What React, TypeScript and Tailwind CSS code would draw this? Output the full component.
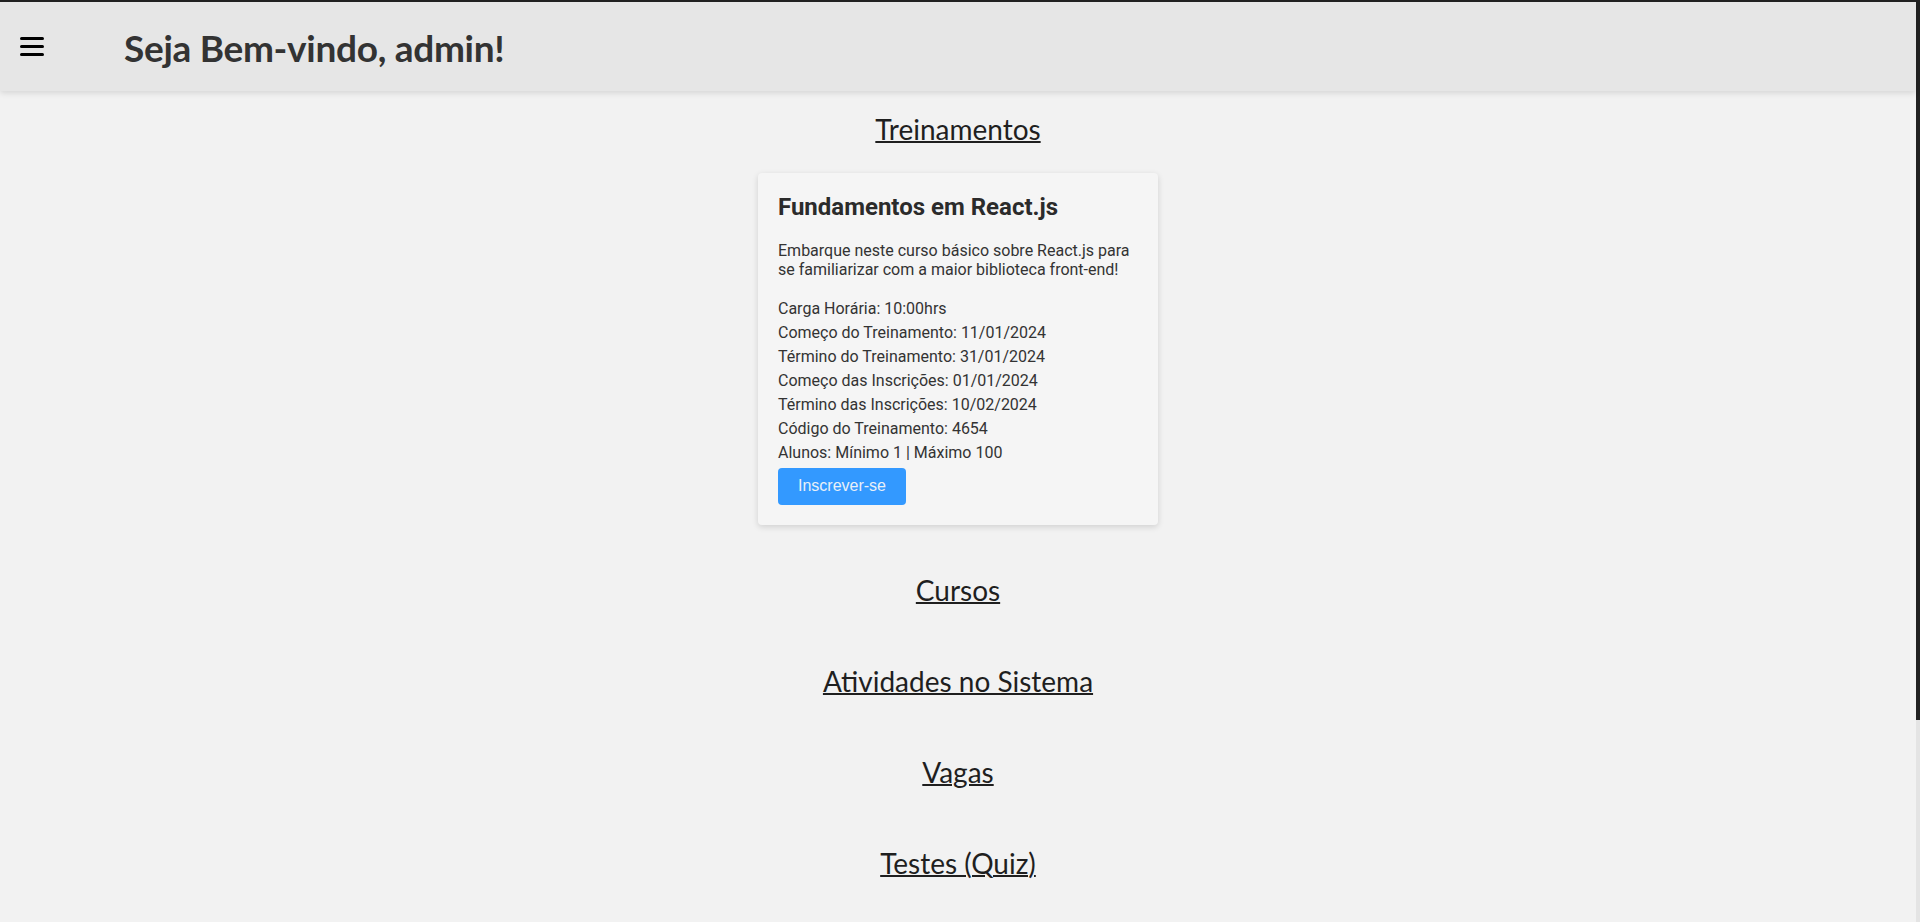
import React from "react";

const training = {
  title: "Fundamentos em React.js",
  description:
    "Embarque neste curso básico sobre React.js para se familiarizar com a maior biblioteca front-end!",
  details: [
    "Carga Horária: 10:00hrs",
    "Começo do Treinamento: 11/01/2024",
    "Término do Treinamento: 31/01/2024",
    "Começo das Inscrições: 01/01/2024",
    "Término das Inscrições: 10/02/2024",
    "Código do Treinamento: 4654",
    "Alunos: Mínimo 1 | Máximo 100",
  ],
};

const sections = ["Cursos", "Atividades no Sistema", "Vagas", "Testes (Quiz)"];

function SectionTitle({ children }: { children: React.ReactNode }) {
  return (
    <h2 className="font-['Lato',sans-serif] text-[28px] font-normal leading-[36px] text-[#1f1f1f] underline decoration-2 underline-offset-[1px]">
      {children}
    </h2>
  );
}

function TrainingCard() {
  return (
    <div className="w-[400px] rounded bg-[#f5f5f5] px-5 pt-5 pb-5 font-['Roboto',sans-serif] text-[#333] shadow-[0_2px_6px_rgba(0,0,0,0.14)]">
      <h3 className="text-2xl font-bold leading-[28px] text-[#2b2b2b]">{training.title}</h3>
      <p className="mt-[21px] text-base leading-[18.75px]">{training.description}</p>
      <div className="mt-[17px]">
        {training.details.map((line) => (
          <p key={line} className="text-base leading-6">
            {line}
          </p>
        ))}
      </div>
      <button className="mt-[3px] h-[37px] w-32 rounded bg-[#3399ff] font-['Liberation_Sans',sans-serif] text-base text-[#e9f0f8]">
        Inscrever-se
      </button>
    </div>
  );
}

export default function App() {
  return (
    <div className="flex h-screen flex-col overflow-hidden bg-[#222]">
      <div className="h-[2px] shrink-0" />
      <div className="flex min-h-0 flex-1">
        <div className="flex flex-1 flex-col bg-[#f2f2f2]">
          <header className="relative z-10 flex h-[89px] shrink-0 items-center bg-[#e6e6e6] pl-5 shadow-[0_2px_6px_rgba(0,0,0,0.12)]">
            <button className="flex w-6 flex-col gap-[5px]" aria-label="menu">
              <span className="h-[3px] w-6 rounded-full bg-black" />
              <span className="h-[3px] w-6 rounded-full bg-black" />
              <span className="h-[3px] w-6 rounded-full bg-black" />
            </button>
            <h1 className="ml-20 mt-[3px] font-['Lato',sans-serif] text-[37px] font-bold tracking-[-0.3px] text-[#333]">
              Seja Bem-vindo, admin!
            </h1>
          </header>
          <main className="flex flex-col items-center pt-5">
            <SectionTitle>Treinamentos</SectionTitle>
            <div className="mt-[26px]">
              <TrainingCard />
            </div>
            <div className="mt-[47px] flex flex-col items-center gap-[55px]">
              {sections.map((s) => (
                <SectionTitle key={s}>{s}</SectionTitle>
              ))}
            </div>
          </main>
        </div>
        <div className="flex w-1 flex-col">
          <div className="h-[718px] bg-[#222]" />
          <div className="flex-1 bg-[#e4e4e4]" />
        </div>
      </div>
    </div>
  );
}
